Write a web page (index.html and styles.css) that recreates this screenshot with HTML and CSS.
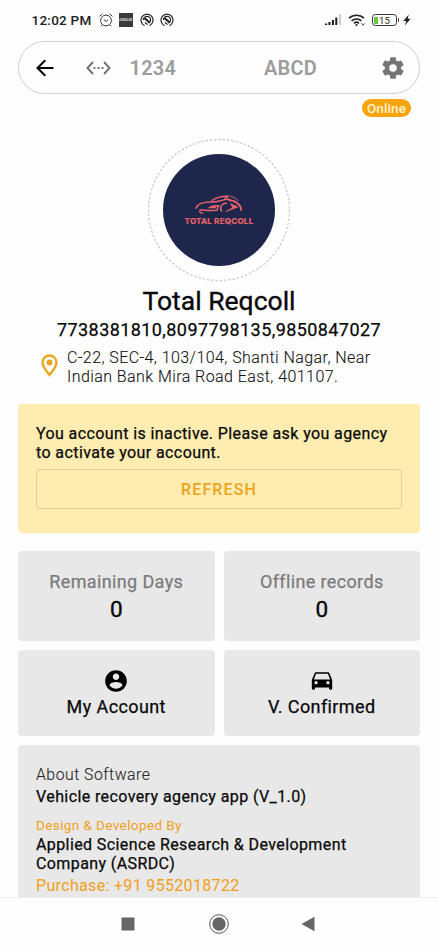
FILE: index.html
```html
<!DOCTYPE html>
<html lang="en">
<head>
<meta charset="utf-8">
<title>Total Reqcoll</title>
<link rel="stylesheet" href="styles.css">
</head>
<body>
<div class="screen">
  <header class="status">
    <span class="time">12:02 PM</span>
    <svg class="alarm" width="14" height="14" viewBox="0 0 14 14" fill="none" stroke="#333" stroke-width="1"><circle cx="7" cy="7.5" r="5.4"/><path d="M4.8 6.5 7 8.5l2.2-1.8M.6 3.3 3.4.8M13.4 3.3 10.6.8M3 12l-1 1.3M11 12l1 1.3"/></svg>
    <span class="app-tile">JUNGLEE</span>
    <svg class="swirl" width="14" height="14" viewBox="0 0 14 14" fill="none" stroke="#222"><path d="M4.5 12.6A6 6 0 1 1 9.5 12.6" stroke-width="1.2"/><path d="M3.4 7a3.6 3.6 0 0 1 7.2 0 3.6 3.6 0 0 1-2 3.2" stroke-width="1.2"/><path d="M4.5 5.2 9.6 9.5" stroke-width="2.2"/><path d="M5 9.5 7.5 11.5" stroke-width="1.2"/></svg>
    <svg class="swirl" width="14" height="14" viewBox="0 0 14 14" fill="none" stroke="#222"><path d="M4.5 12.6A6 6 0 1 1 9.5 12.6" stroke-width="1.2"/><path d="M3.4 7a3.6 3.6 0 0 1 7.2 0 3.6 3.6 0 0 1-2 3.2" stroke-width="1.2"/><path d="M4.5 5.2 9.6 9.5" stroke-width="2.2"/><path d="M5 9.5 7.5 11.5" stroke-width="1.2"/></svg>
    <span class="spacer"></span>
    <svg class="signal" width="17" height="12" viewBox="0 0 17 12" fill="#222"><path d="M0 9.5h2.2V11H0zM3.4 8h2.1v3H3.4zM6.9 6H9v5H6.9zM10.3 3.5h2V11h-2z"/><path fill="#bbb" d="M14.3.5h1.5V11h-1.5z"/></svg>
    <svg class="wifi" width="18" height="14" viewBox="0 0 18 14" fill="none" stroke="#222" stroke-width="1.6"><path d="M1 5.2a11 11 0 0 1 15 0M3.6 7.9a7.2 7.2 0 0 1 9.8 0M6 10.3a3.7 3.7 0 0 1 5 0"/><circle cx="8.5" cy="12" r="1.1" fill="#222" stroke="none"/><path d="M13.5 10.2l1.5 2.2 1.3-2" stroke-width=".8"/></svg>
    <span class="battery"><i class="charge"></i>15</span><i class="cap"></i>
    <svg class="bolt" width="8" height="12" viewBox="0 0 8 12" fill="#222"><path d="M5.8.5.3 7h3L1.8 11.5 7.7 4.8h-3z"/></svg>
  </header>

  <div class="search">
    <svg class="back" width="18" height="18" viewBox="0 0 18 18" fill="none" stroke="#000" stroke-width="2"><path d="M17.5 9H2M9.3 1.2 1.5 9l7.8 7.8"/></svg>
    <svg class="range" width="25" height="14" viewBox="0 0 25 14" fill="none" stroke="#757575" stroke-width="2"><path d="M7 1 1.5 7 7 13M18 1l5.5 6L18 13"/><path d="M7.5 7h2M11.5 7h2M15.5 7h2"/></svg>
    <span class="field digits">1234</span>
    <span class="field letters">ABCD</span>
    <svg class="gear" width="26" height="26" viewBox="0 0 24 24" fill="#757575"><path d="M19.43 12.98c.04-.32.07-.64.07-.98s-.03-.66-.07-.98l2.11-1.65c.19-.15.24-.42.12-.64l-2-3.46c-.12-.22-.39-.3-.61-.22l-2.49 1c-.52-.4-1.08-.73-1.69-.98l-.38-2.65A.488.488 0 0 0 14 2h-4c-.25 0-.46.18-.49.42l-.38 2.65c-.61.25-1.17.59-1.69.98l-2.49-1c-.23-.09-.49 0-.61.22l-2 3.46c-.13.22-.07.49.12.64l2.11 1.65c-.04.32-.07.65-.07.98s.03.66.07.98l-2.11 1.65c-.19.15-.24.42-.12.64l2 3.46c.12.22.39.3.61.22l2.49-1c.52.4 1.08.73 1.69.98l.38 2.65c.03.24.24.42.49.42h4c.25 0 .46-.18.49-.42l.38-2.65c.61-.25 1.17-.59 1.69-.98l2.49 1c.23.09.49 0 .61-.22l2-3.46c.12-.22.07-.49-.12-.64zM12 15.5A3.5 3.5 0 1 1 12 8.500a3.500 3.500 0 0 1 0 7z"/></svg>
  </div>
  <div class="badge-row"><span class="badge">Online</span></div>

  <main>
    <section class="profile">
      <div class="avatar">
        <svg class="ring" width="144" height="144" viewBox="0 0 144 144"><circle cx="72" cy="72" r="70.500" fill="none" stroke="#ccc" stroke-width="1.4" stroke-dasharray="2.4 1.9"/></svg>
        <div class="disc">
          <svg width="48" height="20" viewBox="0 0 48 20" fill="none" stroke="#e9636b" stroke-linecap="round"><path d="M1.200 13C2.500 8.500 8 6.800 17 7c6 .2 9-2.200 17-3" stroke-width="1.700"/><path d="M17 5.500C21 2.300 25 1.300 33 1.200L30 3.500" stroke-width="1.500"/><path d="M36 1.500c3.500.8 6 2.300 7 4" stroke-width="1"/><path d="M34 5c7 .8 11.500 4.500 12.200 10" stroke-width="1.900"/><path d="M5 14.800c5 1.200 11 .8 17 .5l1.500-4.500c-4-.2-7 .2-9 1.700h6" stroke-width="1.400"/><path d="M4.500 16.800l3 1.500M26.500 16c-2.500-4 .5-7.500 5-8" stroke-width="1.500"/><path d="M31 16.500l12-4.500-7.500-3.400 2 3.800z" fill="#e9636b" stroke-width=".6"/></svg>
          <span class="brand">TOTAL REQCOLL</span>
        </div>
      </div>
      <h1>Total Reqcoll</h1>
      <p class="phones">7738381810,8097798135,9850847027</p>
      <div class="address">
        <svg width="17" height="23" viewBox="0 0 17 23"><path d="M8.500 1.500a7 7 0 0 0-7 7c0 4.500 4 8.500 7 12.500 3-4 7-8 7-12.500a7 7 0 0 0-7-7z" fill="none" stroke="#eba41c" stroke-width="2.300"/><circle cx="8.500" cy="8.500" r="2.900" fill="#eba41c"/></svg>
        <p>C-22, SEC-4, 103/104, Shanti Nagar, Near<br>Indian Bank Mira Road East, 401107.</p>
      </div>
    </section>

    <section class="notice">
      <p>You account is inactive. Please ask you agency<br>to activate your account.</p>
      <button class="refresh">REFRESH</button>
    </section>

    <section class="cards">
      <div class="card stat"><span class="label">Remaining Days</span><span class="value">0</span></div>
      <div class="card stat"><span class="label">Offline records</span><span class="value">0</span></div>
      <div class="card link">
        <svg width="26" height="26" viewBox="0 0 24 24"><path d="M12 2C6.480 2 2 6.480 2 12s4.480 10 10 10 10-4.480 10-10S17.520 2 12 2zm0 3c1.660 0 3 1.340 3 3s-1.340 3-3 3-3-1.340-3-3 1.340-3 3-3zm0 14.200c-2.500 0-4.710-1.280-6-3.220.03-1.990 4-3.080 6-3.080 1.990 0 5.970 1.090 6 3.080-1.290 1.940-3.500 3.220-6 3.220z"/></svg>
        <span>My Account</span>
      </div>
      <div class="card link">
        <svg width="26" height="26" viewBox="0 0 24 24"><path d="M18.920 5.010C18.720 4.420 18.160 4 17.500 4h-11c-.66 0-1.210.42-1.420 1.010L2.600 11v8c0 .55.45 1 1 1h.9c.55 0 1-.45 1-1v-1h13v1c0 .55.45 1 1 1h.9c.55 0 1-.45 1-1v-8zM6.500 15c-.83 0-1.500-.67-1.500-1.500S5.670 12 6.500 12s1.500.67 1.500 1.500S7.330 15 6.500 15zm11 0c-.83 0-1.500-.67-1.500-1.500s.67-1.500 1.500-1.500 1.500.67 1.500 1.500-.67 1.500-1.500 1.500zM4.500 10.500l2-5.200h11l2 5.200z"/></svg>
        <span>V. Confirmed</span>
      </div>
    </section>

    <section class="about">
      <p class="heading">About Software</p>
      <p class="version">Vehicle recovery agency app (V_1.0)</p>
      <p class="credit">Design &amp; Developed By</p>
      <p class="company">Applied Science Research &amp; Development<br>Company (ASRDC)</p>
      <p class="purchase">Purchase: +91 9552018722</p>
    </section>
  </main>

  <nav class="nav">
    <svg width="14" height="14" viewBox="0 0 14 14"><path fill="#666" d="M.5.5h13v13H.5z"/></svg>
    <svg width="20" height="20" viewBox="0 0 20 20"><circle cx="10" cy="10" r="9.300" fill="none" stroke="#555" stroke-width="1"/><circle cx="10" cy="10" r="6.700" fill="#666"/></svg>
    <svg width="14" height="16" viewBox="0 0 14 16"><path fill="#666" d="M13.500.8v14.400L.5 8z"/></svg>
  </nav>
</div>
</body>
</html>
```

FILE: styles.css
```css
* { box-sizing: border-box; }
body { margin: 0; background: #fefefe; color: #080808; font-family: Roboto, sans-serif; }
p, h1 { margin: 0; white-space: nowrap; }
svg { display: block; flex: none; }
.screen { width: 438px; height: 950px; display: flex; flex-direction: column; overflow: hidden; }

.status { height: 41px; flex: none; display: flex; align-items: center; padding: 0 27px 1px 31.500px; color: #222; }
.time { width: 60px; font-size: 13.5px; font-weight: 500; letter-spacing: .25px; white-space: nowrap; }
.alarm { margin-left: 7px; }
.app-tile { width: 14px; height: 14px; margin-left: 6px; background: #3b3b3b; color: #ddd; font-size: 3.2px; font-weight: 700; line-height: 14px; text-align: center; }
.swirl { margin-left: 7px; }
.swirl + .swirl { margin-left: 6px; }
.spacer { flex: 1; }
.wifi { margin: 0 6px 0 6px; }
.battery { width: 25px; height: 12px; border: 1.5px solid #333; border-radius: 3.500px; display: flex; align-items: center; font-size: 9.500px; letter-spacing: .2px; line-height: 9px; padding-left: 1px; gap: 1px; }
.charge { width: 4px; height: 7px; background: #6cc644; }
.cap { width: 1.5px; height: 4px; background: #444; margin: 0 4px 0 .5px; }

.search { height: 53px; flex: none; margin: 0 18px; border: 1px solid #cfcfcf; border-radius: 27px; display: flex; align-items: center; padding-left: 17px; }
.range { margin-left: 32px; }
.field { color: #9c9c9c; font-size: 20px; font-weight: 600; white-space: nowrap; }
.digits { width: 134.500px; margin-left: 18.500px; letter-spacing: .2px; }
.letters { width: 116px; letter-spacing: .2px; }
.badge-row { height: 28px; flex: none; padding: 4.500px 27px 0; display: flex; justify-content: flex-end; }
.badge { width: 49px; height: 18.500px; border-radius: 9.500px; background: #f8a40c; color: #fff3cf; font-size: 13.500px; font-weight: 500; line-height: 19px; text-align: center; letter-spacing: .1px; }

main { flex: 1; min-height: 0; overflow: hidden; padding: 16px 18px 0; }
.profile { height: 266px; display: flex; flex-direction: column; align-items: center; }
.avatar { width: 144px; height: 144px; display: grid; place-items: center; }
.ring, .disc { grid-area: 1 / 1; }
.disc { width: 112px; height: 112px; border-radius: 50%; background: #1e274b; color: #e9636b; display: flex; flex-direction: column; align-items: center; padding-top: 41px; }
.brand { font-family: Inter, sans-serif; font-size: 8.100px; font-weight: 700; line-height: 10px; margin-top: 1px; white-space: nowrap; letter-spacing: .2px; -webkit-text-stroke: .2px; }
h1 { font-size: 26.500px; font-weight: 400; line-height: 32px; margin-top: 3px; -webkit-text-stroke: .35px; }
.phones { font-size: 18px; font-weight: 400; line-height: 22px; margin-top: 2px; letter-spacing: .42px; -webkit-text-stroke: .25px; }
.address { width: 100%; display: flex; gap: 9px; padding-left: 23px; margin-top: 7px; font-size: 16px; font-weight: 300; line-height: 19px; letter-spacing: .43px; color: #111; -webkit-text-stroke: .1px; }
.address svg { margin-top: 6px; }

.notice { height: 129px; border-radius: 4px; background: #feecb1; padding: 20px 18px 0; font-size: 16px; line-height: 19px; letter-spacing: .4px; }
.notice p, .version, .company { -webkit-text-stroke: .25px; }
.refresh { width: 100%; height: 40px; margin-top: 7px; padding: 0; display: block; border: 1px solid #dccf9d; border-radius: 4px; background: none; color: #efa51b; font: 500 16px Roboto, sans-serif; letter-spacing: 1.100px; }

.cards { margin-top: 18px; display: grid; grid-template: 90px 86px / 1fr 1fr; gap: 9px; }
.card { border-radius: 4px; background: #e8e8e8; display: flex; flex-direction: column; align-items: center; -webkit-text-stroke: .25px; }
.stat { padding-top: 20px; }
.label { color: #7b7b7b; font-size: 18px; line-height: 22px; letter-spacing: .37px; }
.value { font-size: 22.500px; line-height: 26px; margin-top: 3px; -webkit-text-stroke: .4px; }
.link { padding-top: 18px; font-size: 18px; letter-spacing: .4px; line-height: 22px; }
.link span { margin-top: 2px; }

.about { height: 220px; margin-top: 9px; border-radius: 4px 4px 0 0; background: #e8e8e8; padding: 20px 18px 0; font-size: 16px; letter-spacing: .4px; line-height: 19px; }
.heading { font-size: 15.800px; font-weight: 300; color: #222; letter-spacing: .5px; -webkit-text-stroke: .1px; }
.version { margin-top: 3px; }
.credit { margin-top: 10px; font-size: 13.500px; color: #ef9f1b; }
.company { margin-top: 0; }
.purchase { margin-top: 3px; color: #ef9f1b; letter-spacing: .33px; }

.nav { height: 53px; flex: none; border-top: 1px solid #eee; background: #fefefe; display: flex; align-items: center; justify-content: space-between; padding: 0 123px 0 121px; }
.nav svg:nth-child(2) { margin-left: 1px; }
```
